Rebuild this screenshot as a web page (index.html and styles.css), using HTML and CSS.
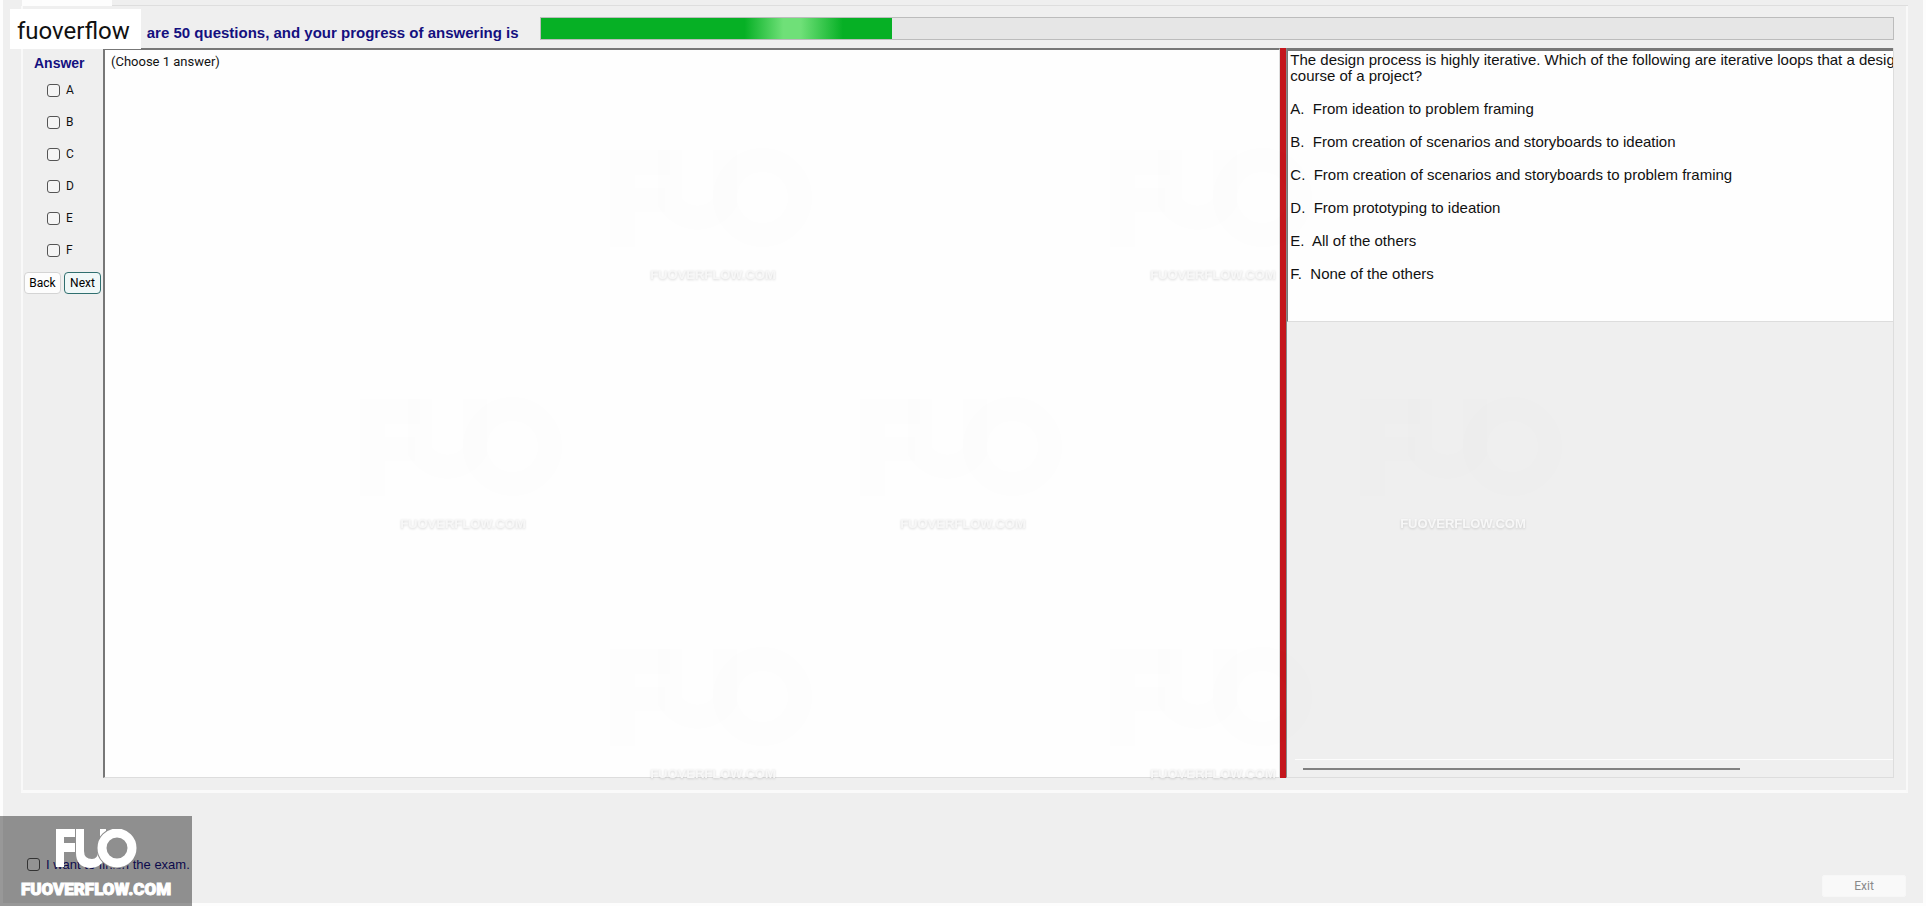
FILE: index.html
```
<!DOCTYPE html>
<html lang="en">

<head>
    <meta charset="UTF-8">
    <meta name="viewport" content="width=device-width, initial-scale=1.0">
    <title>Exam</title>
    <link rel="stylesheet" href="styles.css">
</head>

<body>
    <div class="window">
        <div class="tabs">
            <div class="tab"></div>
        </div>

        <!-- Question group -->
        <main class="group">
            <div class="header">
                <div class="brand">fuoverflow</div>
                <label class="summary" for="progress">are 50 questions, and your progress of answering is</label>
                <div class="progress" id="progress" role="progressbar" aria-valuenow="26">
                    <div class="bar" style="width: 26%"></div>
                </div>
            </div>

            <div class="content">
                <form class="answers">
                    <h2>Answer</h2>
                    <label><input type="checkbox"> A</label>
                    <label><input type="checkbox"> B</label>
                    <label><input type="checkbox"> C</label>
                    <label><input type="checkbox"> D</label>
                    <label><input type="checkbox"> E</label>
                    <label><input type="checkbox"> F</label>
                    <div class="buttons">
                        <button type="button">Back</button>
                        <button type="button" class="next">Next</button>
                    </div>
                </form>

                <div class="choose">(Choose 1 answer)</div>
                <div class="splitter"></div>

                <section class="question">
                    <div class="text">
                        <p>The design process is highly iterative. Which of the following are iterative loops that a designer<br>course of a project?</p>
                        <p>A.&nbsp; From ideation to problem framing</p>
                        <p>B.&nbsp; From creation of scenarios and storyboards to ideation</p>
                        <p>C.&nbsp; From creation of scenarios and storyboards to problem framing</p>
                        <p>D.&nbsp; From prototyping to ideation</p>
                        <p>E.&nbsp; All of the others</p>
                        <p>F.&nbsp; None of the others</p>
                    </div>
                    <div class="scrollbar">
                        <div class="thumb"></div>
                    </div>
                </section>
            </div>
        </main>

        <footer class="footer">
            <label class="finish"><input type="checkbox"> I want to finish the exam.</label>
            <button type="button" class="exit" disabled>Exit</button>
        </footer>
    </div>

    <!-- Faint repeated watermark -->
    <svg class="watermark" viewBox="0 0 1926 906" aria-hidden="true">
        <defs>
            <g id="fuo" fill="none" stroke-width="10">
                <path d="M5 39V5H24M5 20H22" />
                <path d="M24 0V21A13 13 0 0 0 46 21V0" />
                <circle cx="61" cy="19" r="15" />
            </g>
            <g id="mark">
                <use href="#fuo" class="ghost" transform="scale(2.5)" />
                <text x="103" y="129" text-anchor="middle">FUOVERFLOW.COM</text>
            </g>
        </defs>
        <use href="#mark" x="610" y="150" />
        <use href="#mark" x="1110" y="150" />
        <use href="#mark" x="360" y="399" />
        <use href="#mark" x="860" y="399" />
        <use href="#mark" x="1360" y="399" />
        <use href="#mark" x="610" y="649" />
        <use href="#mark" x="1110" y="649" />
    </svg>

    <!-- Corner logo -->
    <div class="logo">
        <svg width="81" height="40" viewBox="0 0 81 40" aria-hidden="true">
            <path class="letter" d="M0 0H19V8H8V14H19V23H8V38H0Z" />
            <path class="letter" d="M20 0H28V22Q28 30 36 30Q42 30 42 22V17Q42 12 44 9V0H50V12L49 30Q44 39 34 39Q20 38 20 24Z" />
            <circle class="edge" cx="61" cy="19" r="15" />
            <circle class="ring" cx="61" cy="19" r="15" />
        </svg>
        <span>FUOVERFLOW.COM</span>
    </div>
</body>

</html>
```

FILE: styles.css
```
* {
    box-sizing: border-box;
}

body {
    margin: 0;
    font-family: "Liberation Sans", Arial, sans-serif;
    font-size: 12px;
    color: #111;
    background-color: #efefef;
}

.window {
    display: flex;
    flex-direction: column;
    min-height: 100vh;
    border: 3px solid #fdfdfd;
    border-top: 0;
}

.tabs {
    height: 6px;
    margin: 0 15px 0 19px;
    border-bottom: 1px solid #dedede;
}

.tab {
    width: 90px;
    height: 6px;
    background-color: #fdfdfd;
}

.group {
    flex: 1;
    display: flex;
    flex-direction: column;
    margin: 0 15px 0 18px;
    padding: 0 12px 12px 0;
    border: 2px solid #f9f9f9;
    border-top: 0;
    border-bottom: 3px solid #fafafa;
}

.header {
    display: flex;
    align-items: center;
    height: 42px;
}

.brand {
    position: relative;
    z-index: 1;
    height: 40px;
    margin: 4px 6px 0 -13px;
    padding: 0 11px 0 7px;
    font-family: Roboto, sans-serif;
    font-size: 24px;
    line-height: 44px;
    background-color: #fff;
}

.summary {
    margin: 10px 21px 0 0;
    font-size: 15px;
    font-weight: bold;
    color: #14107f;
}

.progress {
    flex: 1;
    height: 23px;
    margin-top: 3px;
    border: 1px solid #bcbcbc;
    background-color: #e6e6e6;
}

.bar {
    height: 100%;
    background: linear-gradient(to right, #06b025 58%, #6fe078 69%, #6fe078 74%, #06b025 86%);
}

.content {
    flex: 1;
    display: grid;
    grid-template-columns: 80px minmax(0, 1176fr) 6px minmax(0, 607fr);
}

.answers {
    display: flex;
    flex-direction: column;
    font-family: Roboto, sans-serif;
}

h2 {
    margin: 6px 0 2px 11px;
    font-family: "Liberation Sans", Arial, sans-serif;
    font-size: 14px;
    line-height: 18px;
    color: #14107f;
}

.answers label {
    display: flex;
    align-items: center;
    gap: 6px;
    height: 32px;
    padding-left: 24px;
}

input {
    appearance: none;
    width: 13px;
    height: 13px;
    margin: 0;
    border: 1px solid #555;
    border-radius: 3px;
    background-color: #f5f5f5;
}

.buttons {
    display: flex;
    gap: 3px;
    margin: 6px 0 0 1px;
}

button {
    height: 22px;
    padding: 0;
    font-family: Roboto, sans-serif;
    font-size: 12px;
    border: 1px solid #d4d4d4;
    border-radius: 4px;
    background-color: #fdfdfd;
}

.buttons button {
    width: 37px;
}

.buttons .next {
    border-color: #2f6f6f;
    background-color: #f0f8f8;
}

.choose {
    padding: 4px 6px;
    font-family: Roboto, sans-serif;
    font-size: 13px;
    border: 1px solid #ddd;
    border-top: 2px solid #777;
    border-left: 2px solid #777;
    background-color: #fefefe;
}

.splitter {
    background-color: #c4161c;
}

.question {
    display: flex;
    flex-direction: column;
    justify-content: space-between;
    border-left: 1px solid #888;
    border-right: 1px solid #ddd;
    border-bottom: 1px solid #ddd;
}

.text {
    height: 274px;
    padding: 1px 2px;
    overflow: hidden;
    font-size: 15px;
    line-height: 16px;
    white-space: nowrap;
    border-top: 3px solid #777;
    border-left: 1px solid #777;
    border-bottom: 1px solid #ddd;
    background-color: #fefefe;
}

.text p {
    margin: 0 0 17px;
}

.scrollbar {
    height: 18px;
    margin-left: 8px;
    padding: 8px;
    border-top: 1px solid #fcfcfc;
}

.thumb {
    width: 75%;
    height: 2px;
    background-color: #808080;
}

.footer {
    display: flex;
    align-items: flex-start;
    justify-content: space-between;
    height: 110px;
    padding: 0 17px 0 24px;
}

.finish {
    display: flex;
    align-items: center;
    gap: 6px;
    margin-top: 64px;
    font-size: 13px;
    color: #14107f;
}

.exit {
    width: 84px;
    margin-top: 82px;
    color: #8a8a8a;
    border-color: #f7f7f7;
    border-radius: 2px;
    background-color: #f9f9f9;
}

.watermark {
    position: absolute;
    top: 0;
    left: 0;
    width: 100%;
    pointer-events: none;
}

.watermark text {
    font-size: 13px;
    font-weight: bold;
    fill: #f7f7f7;
    filter: drop-shadow(0 1px 1px rgba(0, 0, 0, .15));
}

.ghost {
    stroke: rgba(0, 0, 0, .004);
}

.logo {
    position: absolute;
    bottom: 0;
    left: 0;
    display: flex;
    flex-direction: column;
    align-items: center;
    gap: 8px;
    width: 192px;
    height: 90px;
    padding-top: 13px;
    background-color: rgba(0, 0, 0, .4);
    pointer-events: none;
}

.letter {
    fill: #fff;
}

.ring {
    fill: none;
    stroke: #fff;
    stroke-width: 9;
}

.edge {
    fill: none;
    stroke: #8f8f8f;
    stroke-width: 11;
}

.logo span {
    font-family: Roboto, sans-serif;
    font-size: 17px;
    font-weight: 900;
    line-height: 24px;
    color: #fff;
    -webkit-text-stroke: 1px #fff;
}
```
